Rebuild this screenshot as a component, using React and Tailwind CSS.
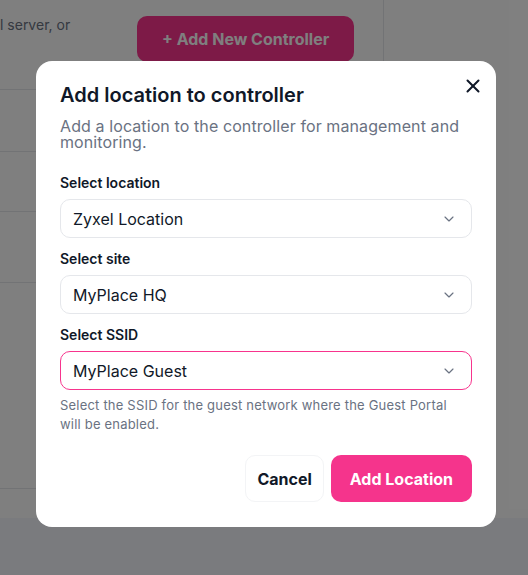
import { X, ChevronDown } from "lucide-react";

const font = { fontFamily: "Inter, 'Noto Sans', sans-serif" };

function Field({ label, value, active }) {
  return (
    <div className="flex flex-col">
      <label className="text-[14px] leading-[20px] font-semibold text-gray-900 mb-1.5">{label}</label>
      <div
        className={`h-[39px] flex items-center justify-between pl-3 pr-[14px] rounded-[10px] bg-white border ${
          active ? "border-[#f7348d]" : "border-gray-200"
        }`}
      >
        <span className="text-[16px] text-gray-900">{value}</span>
        <ChevronDown className="w-4 h-4 text-gray-500" strokeWidth={1.75} />
      </div>
    </div>
  );
}

export default function App() {
  return (
    <div className="relative w-[528px] h-[575px] overflow-hidden bg-[#f4f6fc]" style={font}>
      {/* Page behind the dialog */}
      <div className="flex h-[518px] bg-white">
        <div className="w-[384px] border-r border-gray-200 flex flex-col">
          <div className="h-[90px] border-b border-gray-200 flex items-start">
            <p className="text-[14px] text-gray-500 mt-[14px] w-[118px]">l server, or</p>
            <button className="mt-4 ml-[19px] h-[46px] px-[25px] rounded-[10px] bg-[#fa348e] text-white font-bold text-[16px]">
              + Add New Controller
            </button>
          </div>
          <div className="h-[62px] border-b border-gray-200" />
          <div className="h-[60px] border-b border-gray-200" />
          <div className="h-[71px] border-b border-gray-200" />
          <div className="h-[206px] border-b border-gray-200" />
          <div className="flex-1" />
        </div>
        <div className="flex-1" />
      </div>

      {/* Overlay */}
      <div className="absolute inset-0 bg-black/50" />

      {/* Dialog */}
      <div className="absolute left-[36px] top-[61px] w-[460px] bg-white rounded-2xl pt-5 px-6 pb-[25px]">
        <button className="absolute right-[12px] top-[14px] text-gray-900">
          <X className="w-[22px] h-[22px]" strokeWidth={2.2} />
        </button>
        <h2 className="text-[20px] leading-[28px] font-semibold text-gray-900">Add location to controller</h2>
        <p className="mt-[9px] text-[16px] leading-[16px] text-gray-500 tracking-[0.1px]">
          Add a location to the controller for management and monitoring.
        </p>

        <div className="mt-[23px] flex flex-col gap-[11px]">
          <Field label="Select location" value="Zyxel Location" />
          <Field label="Select site" value="MyPlace HQ" />
          <div className="flex flex-col">
            <Field label="Select SSID" value="MyPlace Guest" active />
            <p className="mt-1.5 text-[13px] leading-[19px] text-gray-500 tracking-[0.2px] pr-[12px]">
              Select the SSID for the guest network where the Guest Portal will be enabled.
            </p>
          </div>
        </div>

        <div className="mt-[21px] flex justify-end gap-[7px]">
          <button className="h-[47px] px-[11px] rounded-[10px] border border-gray-100 bg-white text-[16px] font-bold text-gray-900">
            Cancel
          </button>
          <button className="h-[47px] px-[19px] rounded-[10px] bg-[#f5348c] text-[16px] font-bold text-white">
            Add Location
          </button>
        </div>
      </div>
    </div>
  );
}
